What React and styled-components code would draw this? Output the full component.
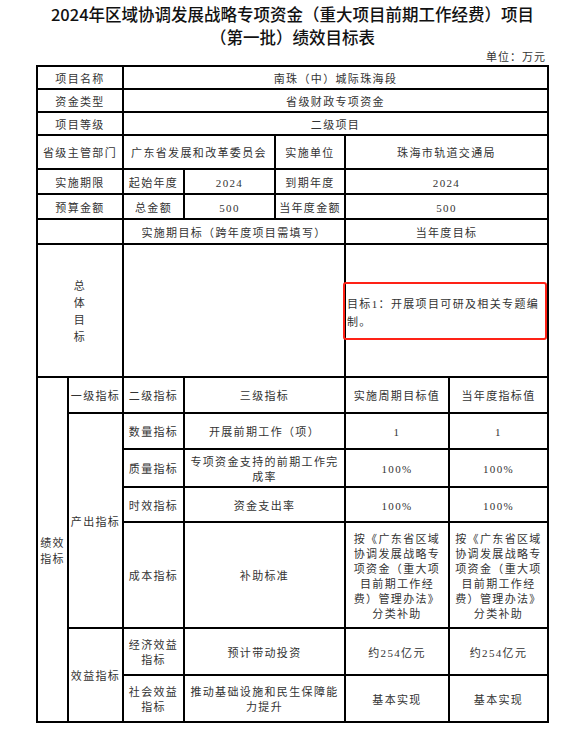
import React from "react";
import styled, { createGlobalStyle } from "styled-components";

const Global = createGlobalStyle`
  html, body { margin: 0; padding: 0; background: #fff; }
  body {
    font-family: "Liberation Serif", "Noto Sans CJK SC", serif;
    color: #333;
  }
`;

const Page = styled.div`
  width: 513px;
  margin-left: 36px;
  padding-top: 3px;
`;

const Title = styled.h1`
  margin: 0;
  font-family: "Noto Sans CJK SC", sans-serif;
  font-weight: 500;
  font-size: 16.5px;
  line-height: 23px;
  text-align: center;
  color: #111;
`;

const Unit = styled.div`
  margin-top: 1px;
  padding-right: 3px;
  text-align: right;
  font-size: 11px;
  letter-spacing: 1px;
  line-height: 14px;
  color: #333;
`;

const Sheet = styled.div`
  margin-top: 1px;
  display: grid;
  grid-template-columns: 29px 53px 59px 89px 68px 102px 97px;
  grid-template-rows: 21px 21px 21px 32px 23px 23px 23px 131px 34px 34px 36px 33px 104px 45px 45px;
  gap: 2px;
  padding: 2px;
  background: #000;
`;

const Cell = styled.div`
  grid-column: ${(p) => p.$col};
  grid-row: ${(p) => p.$row};
  background: #fff;
  display: flex;
  align-items: center;
  justify-content: ${(p) => (p.$left ? "flex-start" : "center")};
  text-align: center;
  padding-top: 3px;
  min-width: 0;
  font-size: 11px;
  letter-spacing: 1.35px;
  line-height: ${(p) => p.$lh || "15px"};
  color: #333;
  white-space: nowrap;
`;

const Txt = styled.span`
  display: block;
`;

const Highlight = styled.div`
  box-sizing: border-box;
  width: calc(100% + 7px);
  margin-left: -3px;
  margin-top: -2px;
  height: 58px;
  border: 2.5px solid #fe2216;
  border-radius: 3px;
  padding: 3px 0 0 2px;
  display: flex;
  flex-direction: column;
  justify-content: center;
  text-align: left;
  line-height: 18px;
`;

const C = ({ col, row, lh, left, children }) => (
  <Cell $col={col} $row={row} $lh={lh} $left={left}>
    {children != null && <Txt>{children}</Txt>}
  </Cell>
);

const CostText = () => (
  <>
    按《广东省区域
    <br />
    协调发展战略专
    <br />
    项资金（重大项
    <br />
    目前期工作经
    <br />
    费）管理办法》
    <br />
    分类补助
  </>
);

export default function App() {
  return (
    <>
      <Global />
      <Page>
        <Title>
          2024年区域协调发展战略专项资金（重大项目前期工作经费）项目
          <br />
          （第一批）绩效目标表
        </Title>
        <Unit>单位：万元</Unit>
        <Sheet>
          <C col="1 / 3" row="1">项目名称</C>
          <C col="3 / 8" row="1">南珠（中）城际珠海段</C>

          <C col="1 / 3" row="2">资金类型</C>
          <C col="3 / 8" row="2">省级财政专项资金</C>

          <C col="1 / 3" row="3">项目等级</C>
          <C col="3 / 8" row="3">二级项目</C>

          <C col="1 / 3" row="4">省级主管部门</C>
          <C col="3 / 5" row="4">广东省发展和改革委员会</C>
          <C col="5 / 6" row="4">实施单位</C>
          <C col="6 / 8" row="4">珠海市轨道交通局</C>

          <C col="1 / 3" row="5">实施期限</C>
          <C col="3 / 4" row="5">起始年度</C>
          <C col="4 / 5" row="5">2024</C>
          <C col="5 / 6" row="5">到期年度</C>
          <C col="6 / 8" row="5">2024</C>

          <C col="1 / 3" row="6">预算金额</C>
          <C col="3 / 4" row="6">总金额</C>
          <C col="4 / 5" row="6">500</C>
          <C col="5 / 6" row="6">当年度金额</C>
          <C col="6 / 8" row="6">500</C>

          <C col="1 / 3" row="7" />
          <C col="3 / 6" row="7">实施期目标（跨年度项目需填写）</C>
          <C col="6 / 8" row="7">当年度目标</C>

          <C col="1 / 3" row="8" lh="17px">
            总<br />体<br />目<br />标
          </C>
          <C col="3 / 6" row="8" />
          <Cell $col="6 / 8" $row="8" $left>
            <Highlight>
              <span>目标1：开展项目可研及相关专题编</span>
              <span>制。</span>
            </Highlight>
          </Cell>

          <C col="1 / 2" row="9 / 16" lh="16px">
            绩效<br />指标
          </C>

          <C col="2 / 3" row="9">一级指标</C>
          <C col="3 / 4" row="9">二级指标</C>
          <C col="4 / 6" row="9">三级指标</C>
          <C col="6 / 7" row="9">实施周期目标值</C>
          <C col="7 / 8" row="9">当年度指标值</C>

          <C col="2 / 3" row="10 / 14">产出指标</C>

          <C col="3 / 4" row="10">数量指标</C>
          <C col="4 / 6" row="10">开展前期工作（项）</C>
          <C col="6 / 7" row="10">1</C>
          <C col="7 / 8" row="10">1</C>

          <C col="3 / 4" row="11">质量指标</C>
          <C col="4 / 6" row="11">
            专项资金支持的前期工作完<br />成率
          </C>
          <C col="6 / 7" row="11">100%</C>
          <C col="7 / 8" row="11">100%</C>

          <C col="3 / 4" row="12">时效指标</C>
          <C col="4 / 6" row="12">资金支出率</C>
          <C col="6 / 7" row="12">100%</C>
          <C col="7 / 8" row="12">100%</C>

          <C col="3 / 4" row="13">成本指标</C>
          <C col="4 / 6" row="13">补助标准</C>
          <C col="6 / 7" row="13"><CostText /></C>
          <C col="7 / 8" row="13"><CostText /></C>

          <C col="2 / 3" row="14 / 16">效益指标</C>

          <C col="3 / 4" row="14">
            经济效益<br />指标
          </C>
          <C col="4 / 6" row="14">预计带动投资</C>
          <C col="6 / 7" row="14">约254亿元</C>
          <C col="7 / 8" row="14">约254亿元</C>

          <C col="3 / 4" row="15">
            社会效益<br />指标
          </C>
          <C col="4 / 6" row="15">
            推动基础设施和民生保障能<br />力提升
          </C>
          <C col="6 / 7" row="15">基本实现</C>
          <C col="7 / 8" row="15">基本实现</C>
        </Sheet>
      </Page>
    </>
  );
}
